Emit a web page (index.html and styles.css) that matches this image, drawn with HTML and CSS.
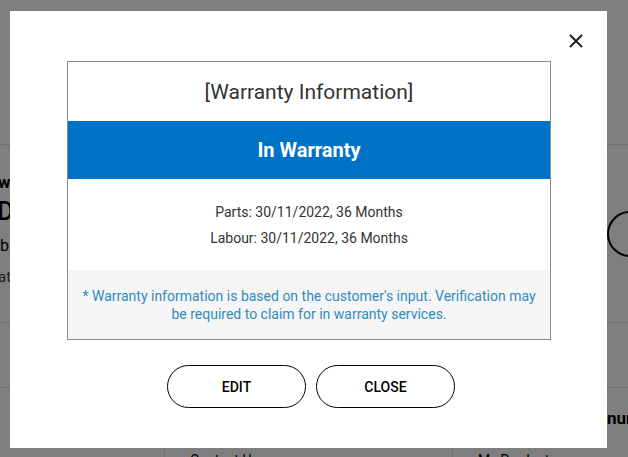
FILE: index.html
```html
<!DOCTYPE html>
<html lang="en">
<head>
<meta charset="utf-8">
<title>Warranty Information</title>
<link rel="stylesheet" href="styles.css">
</head>
<body>
<div class="page">
  <div class="pg-top"></div>
  <div class="pg-product">
    <div class="pg-info">
      <div class="pg-sub">w</div>
      <div class="pg-model">D</div>
      <div class="pg-name">b</div>
      <div class="pg-meta">at</div>
    </div>
    <div class="pg-circle"></div>
  </div>
  <div class="pg-row"></div>
  <div class="pg-row2"><span class="pg-num">nur</span></div>
  <div class="pg-links">
    <div class="pg-cell"></div>
    <div class="pg-cell">Contact Us</div>
    <div class="pg-cell">My Products</div>
  </div>
</div>
<div class="overlay"></div>
<div class="modal">
  <button class="modal-close" aria-label="Close">
    <svg width="14" height="14" viewBox="0 0 14 14"><path d="M1 1 L13 13 M13 1 L1 13" stroke="#1a1a1a" stroke-width="1.8" fill="none"/></svg>
  </button>
  <div class="wbox">
    <div class="wbox-title">[Warranty Information]</div>
    <div class="wbox-status">In Warranty</div>
    <div class="wbox-details">
      <p>Parts: 30/11/2022, 36 Months</p>
      <p>Labour: 30/11/2022, 36 Months</p>
    </div>
    <div class="wbox-note">* Warranty information is based on the customer's input. Verification may be required to claim for in warranty services.</div>
  </div>
  <div class="modal-actions">
    <button class="btn">EDIT</button>
    <button class="btn">CLOSE</button>
  </div>
</div>
</body>
</html>
```
FILE: styles.css
```css
* { box-sizing: border-box; }
html, body { margin: 0; padding: 0; }
body {
  width: 628px;
  height: 457px;
  overflow: hidden;
  font-family: Roboto, "Noto Sans", sans-serif;
  background: #fff;
  color: #000;
  position: relative;
}
.page {
  width: 628px;
  height: 457px;
  display: flex;
  flex-direction: column;
}
.pg-top {
  height: 145px;
  border-bottom: 1px solid #ddd;
  flex: none;
}
.pg-product {
  height: 178px;
  border-bottom: 1px solid #ddd;
  display: flex;
  justify-content: space-between;
  flex: none;
  overflow: hidden;
}
.pg-info {
  padding-top: 27px;
  white-space: nowrap;
}
.pg-sub { font-size: 17px; font-weight: 700; line-height: 20px; margin-left: -2px; }
.pg-model { font-size: 26px; font-weight: 500; line-height: 30px; margin-top: 4px; margin-left: -3px; }
.pg-name { font-size: 16px; line-height: 22px; margin-top: 9px; }
.pg-meta { font-size: 15px; line-height: 20px; margin-top: 10px; color: #444; margin-left: -2px; }
.pg-circle {
  width: 46px;
  height: 46px;
  border-radius: 50%;
  border: 2px solid #000;
  margin-top: 66px;
  margin-right: -25px;
}
.pg-row {
  height: 65px;
  border-bottom: 1px solid #ddd;
  flex: none;
}
.pg-row2 {
  height: 60px;
  display: flex;
  align-items: center;
  flex: none;
  overflow: hidden;
  padding-left: 607px;
}
.pg-num {
  font-size: 17px;
  font-weight: 700;
  white-space: nowrap;
}
.pg-links {
  flex: 1;
  display: grid;
  grid-template-columns: 165px 288px 1fr;
  font-size: 14px;
}
.pg-cell {
  border-right: 1px solid #ddd;
  padding: 4px 0 0 25px;
  white-space: nowrap;
}
.pg-cell:last-child { border-right: none; }

.overlay {
  position: absolute;
  inset: 0;
  background: rgba(0, 0, 0, 0.5);
}
.modal {
  position: absolute;
  left: 10px;
  top: 11px;
  width: 597px;
  height: 437px;
  background: #fff;
  padding: 50px 57px 0;
}
.modal-close {
  position: absolute;
  right: 24px;
  top: 23px;
  width: 14px;
  height: 14px;
  padding: 0;
  border: none;
  background: none;
  display: block;
}
.modal-close svg { display: block; }
.wbox {
  border: 1px solid #8a8a8a;
  width: 484px;
}
.wbox-title {
  height: 59px;
  display: flex;
  align-items: center;
  justify-content: center;
  font-size: 21px;
  color: #333;
}
.wbox-status {
  height: 58px;
  background: #0072c6;
  color: #fff;
  display: flex;
  align-items: center;
  justify-content: center;
  font-size: 20px;
  font-weight: 700;
}
.wbox-details {
  padding: 20px 0 19px;
  text-align: center;
  font-size: 14px;
  color: #333;
}
.wbox-details p { margin: 0; line-height: 26px; }
.wbox-note {
  background: #f5f5f5;
  padding: 17px 12px 16px;
  text-align: center;
  font-size: 14px;
  line-height: 18px;
  color: #2f8cc0;
}
.modal-actions {
  display: flex;
  justify-content: center;
  gap: 10px;
  margin-top: 25px;
  padding-left: 5px;
}
.btn {
  width: 139px;
  height: 43px;
  border: 1px solid #000;
  border-radius: 22px;
  background: #fff;
  font-family: Roboto, "Noto Sans", sans-serif;
  font-size: 14px;
  font-weight: 500;
  color: #000;
  padding: 0;
}
```
